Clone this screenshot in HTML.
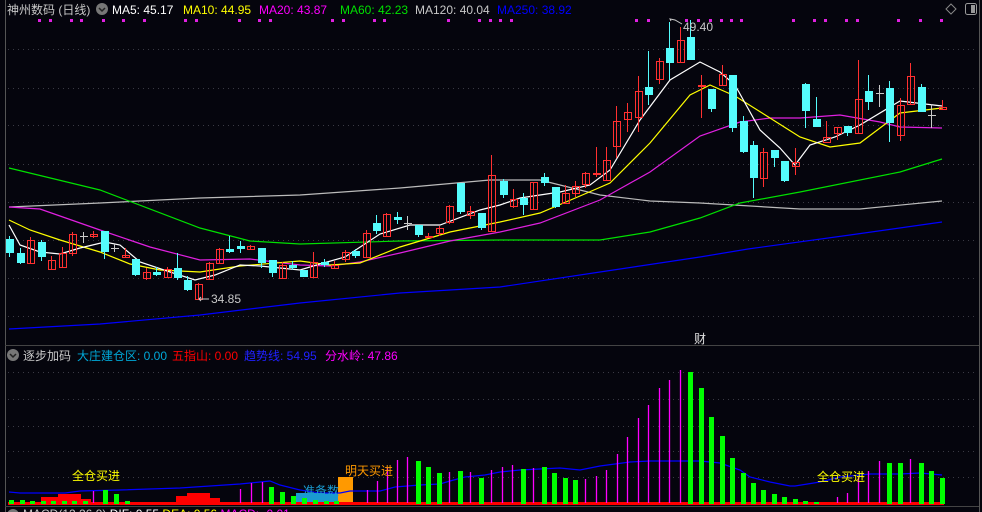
<!DOCTYPE html>
<html><head><meta charset="utf-8"><style>
html,body{margin:0;padding:0;background:#05050d;width:982px;height:512px;overflow:hidden}
svg{display:block}
text{font-family:"Liberation Sans","Noto Sans CJK SC",sans-serif;font-size:12px}
</style></head><body>
<svg id="s" width="982" height="512" viewBox="0 0 982 512" xmlns="http://www.w3.org/2000/svg">
<rect width="982" height="512" fill="#05050d"/>
<g id="grid" stroke="#3a3a44" stroke-width="1" stroke-dasharray="1,4"></g>
<line x1="5.5" y1="0" x2="5.5" y2="512" stroke="#555" />
<line x1="979.5" y1="0" x2="979.5" y2="512" stroke="#555" />
<line x1="5" y1="345.5" x2="979" y2="345.5" stroke="#444" />
<line x1="5" y1="506.5" x2="979" y2="506.5" stroke="#444" />
<g id="dots" fill="#e020e0"></g>
<g fill="none" stroke-width="1.2">
<polyline stroke="#0000ff" points="9,329 100,324 200,315 300,303 400,293 500,287 600,272 700,257 748,249 850,235 942,222"/>
<polyline stroke="#bbbbbb" points="9,207 100,203 200,198 300,195 400,188 490,180 540,180 600,195 650,201 700,203 800,209 860,209 942,201"/>
<polyline stroke="#00e000" points="9,168 100,190 200,228 250,241 300,244 400,241 500,240 570,240 600,240 650,232 700,218 740,203 800,192 900,172 942,159"/>
<polyline stroke="#e020e0" points="9,207 40,209 60,216 100,230 150,247 200,260 250,259 300,265 330,266 360,262 400,253 450,241 500,232 540,223 600,200 650,172 700,136 740,122 770,118 800,118 840,115 880,122 900,127 942,128"/>
<polyline stroke="#ffff00" points="9,220 30,230 60,240 100,252 130,264 160,270 200,272 240,266 300,261 330,265 360,263 400,247 450,232 500,222 540,213 580,196 610,183 650,143 690,95 710,85 735,96 770,118 800,137 830,147 860,143 900,113 942,108"/>
<polyline stroke="#ffffff" points="9,225 20,245 40,252 60,254 80,248 105,242 120,245 140,262 170,272 195,280 215,275 240,265 260,266 280,268 300,270 320,264 345,257 380,234 410,225 440,225 480,210 500,205 520,198 560,192 590,185 610,170 640,120 670,80 700,62 720,72 735,85 760,130 780,148 795,165 810,145 835,137 860,125 900,101 942,106"/>
</g>
<g id="candles"></g>
<g id="lower"></g>
<polyline fill="none" stroke="#0000ff" stroke-width="1.2" points="9,492 20,493 65,493 80,491 120,490 180,488 240,484 250,483 270,481 280,485 300,490 320,493 340,493 350,491 380,491 395,487 420,485 440,484 450,481 465,477 485,475 500,472 520,470 560,468 580,470 600,466 630,462 650,461 700,461 720,463 740,470 750,477 770,482 790,486 795,486 820,482 840,477 870,474 900,474 920,473 942,475"/>
<rect x="8" y="502" width="936" height="3" fill="#ff0000"/>
<g id="lower2"></g>

<text x="7" y="14" fill="#c8c8c8">神州数码 (日线)</text>
<circle cx="102" cy="9" r="6" fill="#777"/><path d="M99 8 L102 11 L105 8" stroke="#222" stroke-width="1.5" fill="none"/>
<text x="112" y="14" fill="#ffffff">MA5: 45.17</text>
<text x="183" y="14" fill="#ffff00">MA10: 44.95</text>
<text x="259" y="14" fill="#ff00ff">MA20: 43.87</text>
<text x="340" y="14" fill="#00e000">MA60: 42.23</text>
<text x="415" y="14" fill="#c8c8c8">MA120: 40.04</text>
<text x="497" y="14" fill="#0000ff">MA250: 38.92</text>
<path d="M951 4 L956 9 L951 14 L946 9 Z" stroke="#888" fill="none"/>
<rect x="965.5" y="3.5" width="11" height="11" rx="2" stroke="#999" fill="none"/><rect x="971" y="5" width="4" height="8" fill="#999"/>

<text x="683" y="31" fill="#c8c8c8">49.40</text>
<path d="M671 21 L670 19 L675 20 L682 24" stroke="#c8c8c8" fill="none"/>
<text x="211" y="303" fill="#c8c8c8">34.85</text>
<path d="M209 299 L199 299 M201 297 L199 299 L201 301" stroke="#c8c8c8" fill="none"/>
<text x="694" y="343" fill="#e0e0e0">财</text>

<circle cx="13" cy="355" r="6" fill="#777"/><path d="M10 354 L13 357 L16 354" stroke="#222" stroke-width="1.5" fill="none"/>
<text x="23" y="360" fill="#c8c8c8">逐步加码</text>
<text x="77" y="360" fill="#00a8d8">大庄建仓区: 0.00</text>
<text x="172" y="360" fill="#ff0000">五指山: 0.00</text>
<text x="244" y="360" fill="#2020ff">趋势线: 54.95</text>
<text x="325" y="360" fill="#ff00ff">分水岭: 47.86</text>

<text x="72" y="480" fill="#ffff00">全仓买进</text>
<text x="345" y="475" fill="#ff9900">明天买进</text>
<text x="817" y="481" fill="#ffff00">全仓买进</text>
<circle cx="13" cy="515" r="6" fill="#777"/>
<text x="23" y="518" fill="#c8c8c8">MACD(12,26,9) <tspan fill="#fff">DIF: 0.55</tspan> <tspan fill="#ff0">DEA: 0.56</tspan> <tspan fill="#f0f">MACD: -0.01</tspan></text>
</svg>
<script>
var NS="http://www.w3.org/2000/svg";
function el(p,t,a){var e=document.createElementNS(NS,t);for(var k in a)e.setAttribute(k,a[k]);document.getElementById(p).appendChild(e);return e;}
[49,88,125,164,202,240,278,316,372,399,426,451,477].forEach(function(y){el("grid","line",{x1:8,y1:y+.5,x2:978,y2:y+.5});});
[40,51,72,82,104,124,145,186,197,240,260,271,333,344,375,385,449,480,491,501,512,637,649,687,699,711,722,732,742,794,815,826,847,858,899,921,942].forEach(function(x){el("dots","rect",{x:x-2,y:19,width:3,height:3});});
var C=[[9,239,253,'c',236,257],[20,253,263,'c',248,264],[30,240,263,'r',237,263],[41,242,257,'c',240,261],[51,260,269,'r',256,269],[62,253,267,'r',247,267],[72,234,253,'r',232,256],[83,236,237,'x',232,243],[93,234,236,'r',231,238],[104,231,252,'c',231,259],[114,248,249,'x',244,252],[125,255,257,'r',248,257],[135,259,275,'c',259,276],[146,272,278,'r',268,280],[156,272,275,'c',267,276],[167,269,277,'r',267,278],[177,268,278,'c',253,280],[187,280,290,'c',276,291],[198,284,299,'r',283,299],[209,263,279,'r',262,279],[219,249,263,'r',248,263],[229,249,252,'c',236,253],[240,246,249,'c',241,253],[250,246,249,'r',245,249],[261,248,263,'c',248,268],[272,260,273,'c',260,277],[282,265,278,'r',262,278],[292,265,268,'c',261,270],[303,270,277,'c',270,277],[313,262,277,'r',252,277],[324,262,265,'c',259,267],[334,265,268,'r',261,268],[345,252,259,'r',250,262],[355,251,256,'c',249,258],[366,233,257,'r',230,257],[376,223,231,'c',215,234],[386,214,236,'r',213,236],[397,217,220,'c',212,224],[407,223,224,'x',216,230],[418,225,235,'c',225,237],[428,236,237,'r',233,238],[439,228,233,'r',226,236],[449,206,222,'r',205,224],[460,183,212,'c',183,214],[470,211,215,'r',206,219],[481,213,228,'c',213,230],[491,175,231,'r',155,231],[503,181,195,'c',179,198],[513,199,206,'r',189,208],[523,198,205,'c',193,215],[533,182,209,'r',182,209],[544,177,183,'c',173,186],[555,187,207,'c',187,208],[565,193,203,'r',185,204],[575,186,193,'r',181,197],[585,173,184,'r',172,188],[596,173,174,'r',147,177],[606,160,180,'r',147,181],[616,121,146,'r',106,158],[627,112,119,'r',103,132],[638,91,117,'r',76,132],[648,87,95,'c',51,105],[659,61,79,'r',58,84],[669,48,63,'c',22,80],[680,40,62,'r',27,63],[690,37,60,'c',20,60],[701,85,86,'r',75,118],[711,89,109,'c',89,112],[722,74,85,'r',65,86],[732,75,128,'c',75,132],[743,121,152,'c',116,153],[753,145,178,'c',141,198],[763,152,178,'r',148,187],[774,150,158,'c',150,167],[784,161,181,'c',161,182],[795,162,166,'r',148,175],[805,84,111,'c',83,128],[816,119,127,'c',97,127],[826,137,142,'r',121,140],[837,127,133,'r',127,140],[847,126,133,'c',126,136],[858,99,133,'r',60,133],[868,91,102,'c',75,110],[879,93,94,'x',85,107],[889,88,123,'c',81,142],[900,105,135,'r',98,141],[910,76,104,'r',63,104],[921,87,112,'c',84,112],[931,115,116,'x',104,128],[942,107,109,'r',100,110]];
C.forEach(function(c){var x=c[0],col=c[3]=='c'?'#54fcfc':(c[3]=='x'?'#c8c8c8':'#ff3030');
el("candles","line",{x1:x+.5,y1:c[4],x2:x+.5,y2:c[5],stroke:col});
if(c[3]=='c')el("candles","rect",{x:x-3,y:c[1],width:8,height:Math.max(1,c[2]-c[1]),fill:col});
else if(c[3]=='x')el("candles","line",{x1:x-3,y1:c[1]+.5,x2:x+5,y2:c[1]+.5,stroke:col});
else el("candles","rect",{x:x-2.5,y:c[1]+.5,width:7,height:Math.max(1,c[2]-c[1]),fill:'none',stroke:col});});
[[41,497,17],[58,494,23],[81,499,10],[176,496,11],[187,493,23],[210,498,10]].forEach(function(r){el("lower","rect",{x:r[0],y:r[1],width:r[2],height:505-r[1],fill:'#ff0000'});});
el("lower","rect",{x:296,y:493,width:42,height:10,fill:'#1a9ad0'});
el("lower","rect",{x:338,y:477,width:15,height:26,fill:'#ff9900'});
var t=document.createElementNS(NS,"text");t.setAttribute("x",303);t.setAttribute("y",495);t.setAttribute("fill","#1a9ad0");t.textContent="准备数";document.getElementById("lower2").appendChild(t);
[[9,500],[20,500],[30,501],[41,501],[51,501],[62,501],[72,501],[83,501],[103,490],[114,494],[125,501],[269,487],[280,492],[291,496],[302,498],[313,500],[324,501],[334,501],[416,461],[426,467],[437,473],[458,471],[479,478],[521,469],[542,467],[552,473],[563,478],[573,480],[688,372],[699,388],[709,417],[720,436],[730,458],[741,473],[751,483],[761,490],[772,494],[782,497],[793,499],[803,501],[814,502],[887,463],[898,463],[919,463],[929,471],[940,478]].forEach(function(g){el("lower2","rect",{x:g[0],y:g[1],width:5,height:504-g[1],fill:'#00ff00'});});
[[93,491],[240,489],[251,483],[262,482],[367,490],[377,481],[387,468],[397,460],[407,457],[449,472],[470,472],[491,470],[502,467],[512,465],[533,468],[585,479],[596,476],[606,470],[617,454],[627,437],[638,418],[648,405],[659,388],[669,380],[680,370],[837,497],[847,493],[858,477],[868,471],[879,461],[910,459]].forEach(function(m){el("lower2","line",{x1:m[0]+.5,y1:m[1],x2:m[0]+.5,y2:503,stroke:'#ff00ff','stroke-width':1.3});});
</script>
</body></html>
